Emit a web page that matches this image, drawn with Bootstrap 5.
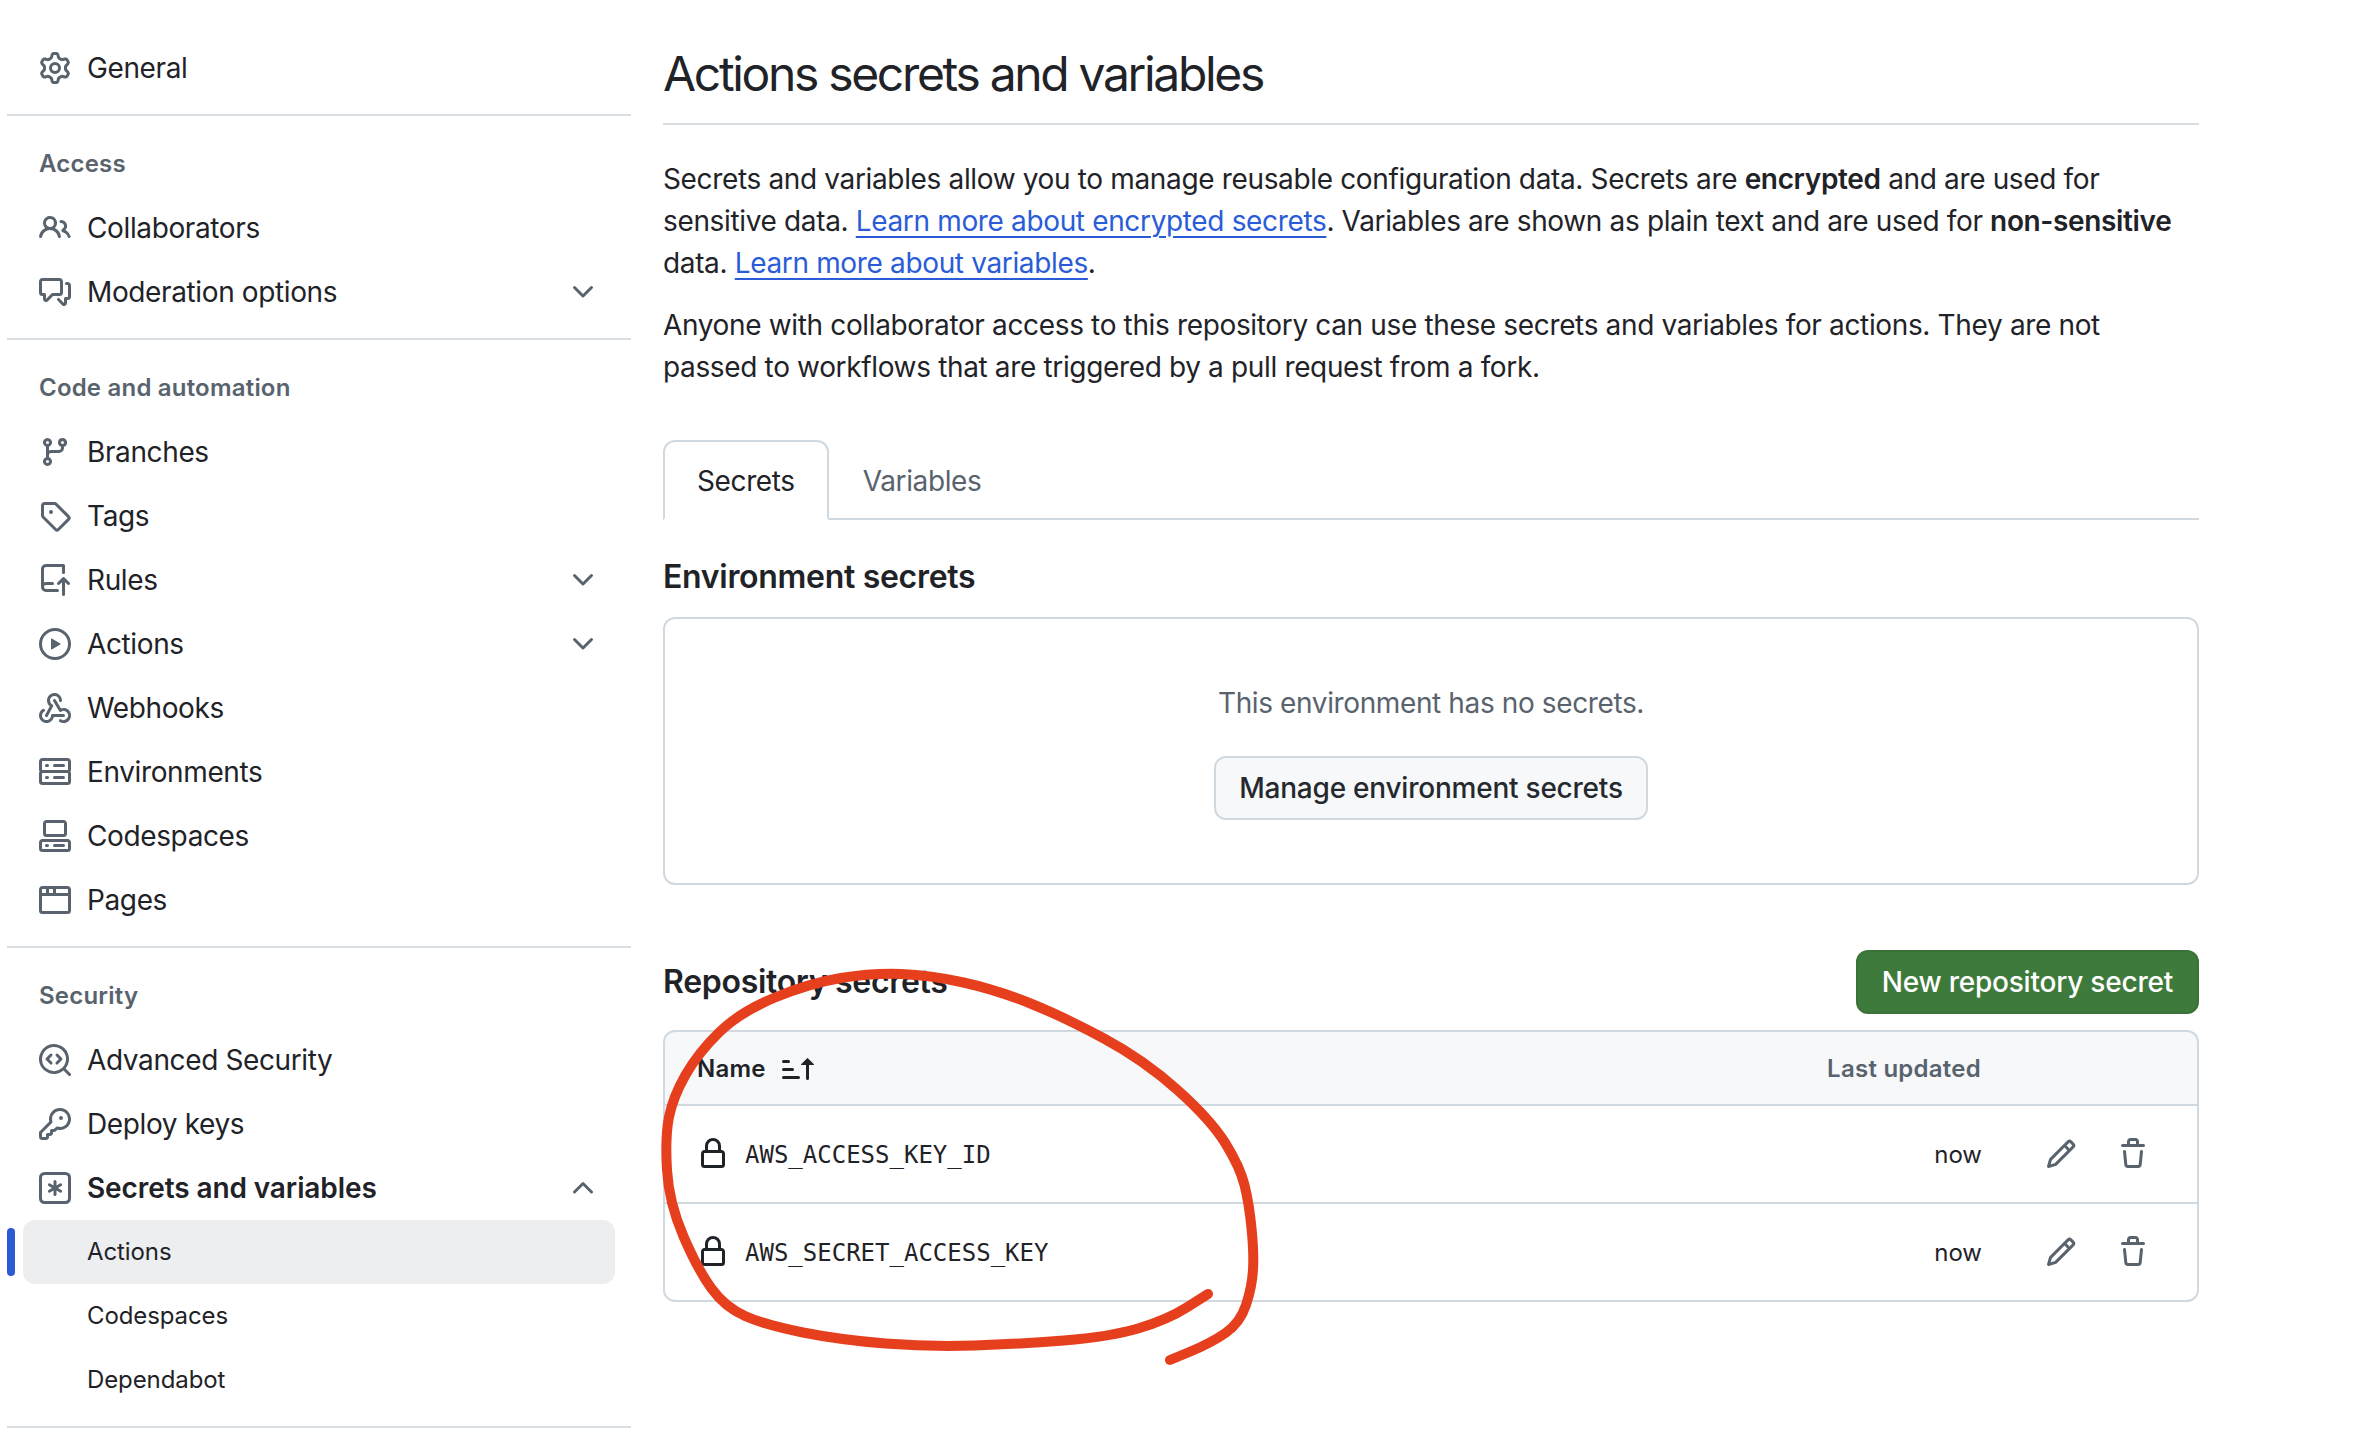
<!DOCTYPE html>
<html lang="en">
  <head>
    <meta charset="UTF-8" />
    <meta name="viewport" content="width=device-width, initial-scale=1.0" />
    <title>Actions secrets and variables</title>
    <link
      href="https://cdn.jsdelivr.net/npm/bootstrap@5.3.0/dist/css/bootstrap.min.css"
      rel="stylesheet"
    />
    <style>
      body {
        font-family: Inter, "Liberation Sans", sans-serif;
        font-size: 28px;
        line-height: 42px;
        letter-spacing: -0.38px;
        color: #1f2328;
        background: #fff;
        position: relative;
        min-height: 1446px;
      }
      .ico {
        width: 32px;
        height: 32px;
        fill: #59636e;
        flex: none;
      }
      .ico-dark {
        fill: #1f2328;
      }
      /* Sidebar */
      .side-col {
        width: 624px;
        margin-left: 7px;
        margin-right: 32px;
        padding-top: 36px;
        flex: none;
      }
      .side-link {
        height: 64px;
        margin: 0 16px;
        padding: 0 16px;
        border-radius: 12px;
        color: #1f2328;
        position: relative;
      }
      .side-link:hover {
        color: #1f2328;
      }
      .side-link .ico-end {
        margin-left: auto;
      }
      .side-strong {
        font-weight: 600;
        letter-spacing: -0.1px;
      }
      .side-sub {
        font-size: 24px;
        letter-spacing: -0.1px;
        padding-left: 64px;
      }
      .side-current {
        background: #eceef0;
      }
      .side-current::before {
        content: "";
        position: absolute;
        left: -16px;
        top: 8px;
        width: 8px;
        height: 48px;
        border-radius: 12px;
        background: #2d5bd3;
      }
      .side-rule {
        height: 2px;
        margin: 14px 0 0;
        background: #d9dee3;
        border: 0;
        opacity: 1;
      }
      .side-head {
        font-size: 24px;
        font-weight: 600;
        line-height: 36px;
        letter-spacing: 0.2px;
        color: #59636e;
        margin: 0;
        padding: 30px 32px 14px;
      }
      /* Main column */
      .main-col {
        width: 1536px;
        flex: none;
      }
      .page-title {
        font-size: 48px;
        font-weight: 400;
        line-height: 72px;
        letter-spacing: -2.33px;
        margin: 38px 0 0;
        padding-bottom: 13px;
        border-bottom: 2px solid #d9dee3;
      }
      .intro {
        letter-spacing: -0.35px;
        margin: 33px 0 20px;
      }
      .intro + .intro {
        margin-top: 0;
      }
      .intro a {
        color: #2a5cd8;
        text-decoration-thickness: 2px;
        text-underline-offset: 5px;
      }
      .intro b {
        font-weight: 600;
      }
      .tab-strip {
        --bs-nav-tabs-border-width: 2px;
        --bs-nav-tabs-border-color: #d1d9e0;
        --bs-nav-tabs-border-radius: 12px;
        --bs-nav-tabs-link-active-color: #1f2328;
        --bs-nav-tabs-link-active-bg: #fff;
        --bs-nav-tabs-link-active-border-color: #d1d9e0 #d1d9e0 #fff;
        --bs-nav-link-padding-x: 32px;
        --bs-nav-link-padding-y: 17px;
        --bs-nav-link-color: #59636e;
        --bs-nav-link-font-size: 28px;
        margin-top: 52px;
      }
      .tab-strip .nav-link {
        padding-top: 18px;
        padding-bottom: 16px;
      }
      .sec-title {
        font-size: 32px;
        font-weight: 600;
        line-height: 48px;
        letter-spacing: -0.3px;
        margin: 0;
      }
      .env-title {
        margin-top: 33px;
      }
      .empty-box {
        border: 2px solid #d1d9e0;
        border-radius: 12px;
        margin-top: 16px;
        padding: 63px 0;
        color: #59636e;
      }
      .btn-plain,
      .btn-create {
        font-size: 28px;
        font-weight: 500;
        line-height: 42px;
        border-radius: 12px;
        border-width: 2px;
      }
      .btn-plain {
        margin-top: 32px;
        padding: 9px 23px;
        letter-spacing: -0.23px;
        color: #25292e;
        background: #f6f8fa;
        border-color: #d1d9e0;
      }
      .btn-create {
        padding: 9px 24px;
        letter-spacing: -0.22px;
        color: #fff;
        background: #3e7a3c;
        border-color: #3a7238;
      }
      .repo-head {
        margin-top: 65px;
      }
      .secret-list {
        --bs-list-group-border-width: 2px;
        --bs-list-group-border-color: #d1d9e0;
        --bs-list-group-border-radius: 12px;
        --bs-list-group-color: #1f2328;
        margin-top: 16px;
      }
      .secret-top {
        height: 76px;
        padding: 2px 216px 0 32px;
        background: #f6f8fa;
        font-size: 24px;
        font-weight: 600;
        letter-spacing: 0.25px;
      }
      .secret-top .muted-head {
        color: #59636e;
      }
      .secret-row {
        height: 98px;
        padding: 0 48px 0 32px;
      }
      .secret-name {
        font-family: "DejaVu Sans Mono", "Liberation Mono", monospace;
        font-size: 24px;
        letter-spacing: 0;
        padding-top: 2px;
      }
      .secret-when {
        font-size: 24px;
        letter-spacing: 0;
        padding-top: 1px;
      }
      .row-tools {
        margin-left: 63px;
        gap: 40px;
      }
      .scribble {
        position: absolute;
        left: 0;
        top: 0;
        pointer-events: none;
      }
    </style>
  </head>
  <body>
    <!-- octicons used on the page -->
    <svg width="0" height="0" class="position-absolute">
      <symbol id="i-gear" viewBox="0 0 16 16"><path d="M8 0a8.2 8.2 0 0 1 .701.031C9.444.095 9.99.645 10.16 1.29l.288 1.107c.018.066.079.158.212.224.231.114.454.243.668.386.123.082.233.09.299.071l1.103-.303c.644-.176 1.392.021 1.82.63.27.385.506.792.704 1.218.315.675.111 1.422-.364 1.891l-.814.806c-.049.048-.098.147-.088.294.016.257.016.515 0 .772-.01.147.038.246.088.294l.814.806c.475.469.679 1.216.364 1.891a7.977 7.977 0 0 1-.704 1.217c-.428.61-1.176.807-1.82.63l-1.102-.302c-.067-.019-.177-.011-.3.071a5.909 5.909 0 0 1-.668.386c-.133.066-.194.158-.211.224l-.29 1.106c-.168.646-.715 1.196-1.458 1.26a8.006 8.006 0 0 1-1.402 0c-.743-.064-1.289-.614-1.458-1.26l-.289-1.106c-.018-.066-.079-.158-.212-.224a5.738 5.738 0 0 1-.668-.386c-.123-.082-.233-.09-.299-.071l-1.103.303c-.644.176-1.392-.021-1.82-.63a8.12 8.12 0 0 1-.704-1.218c-.315-.675-.111-1.422.363-1.891l.815-.806c.05-.048.098-.147.088-.294a6.214 6.214 0 0 1 0-.772c.01-.147-.038-.246-.088-.294l-.815-.806C.635 6.045.431 5.298.746 4.623a7.92 7.92 0 0 1 .704-1.217c.428-.61 1.176-.807 1.82-.63l1.102.302c.067.019.177.011.3-.071.214-.143.437-.272.668-.386.133-.066.194-.158.211-.224l.29-1.106C6.009.645 6.556.095 7.299.03 7.53.01 7.764 0 8 0Zm-.571 1.525c-.036.003-.108.036-.137.146l-.289 1.105c-.147.561-.549.967-.998 1.189-.173.086-.34.183-.5.29-.417.278-.97.423-1.529.27l-1.103-.303c-.109-.03-.175.016-.195.045-.22.312-.412.644-.573.99-.014.031-.021.11.059.19l.815.806c.411.406.562.957.53 1.456a4.709 4.709 0 0 0 0 .582c.032.499-.119 1.05-.53 1.456l-.815.806c-.081.08-.073.159-.059.19.162.346.353.677.573.989.02.03.085.076.195.046l1.102-.303c.56-.153 1.113-.008 1.53.27.161.107.328.204.501.29.447.222.85.629.997 1.189l.289 1.105c.029.109.101.143.137.146a6.6 6.6 0 0 0 1.142 0c.036-.003.108-.036.137-.146l.289-1.105c.147-.561.549-.967.998-1.189.173-.086.34-.183.5-.29.417-.278.97-.423 1.529-.27l1.103.303c.109.029.175-.016.195-.045.22-.313.411-.644.573-.99.014-.031.021-.11-.059-.19l-.815-.806c-.411-.406-.562-.957-.53-1.456a4.709 4.709 0 0 0 0-.582c-.032-.499.119-1.05.53-1.456l.815-.806c.081-.08.073-.159.059-.19a6.464 6.464 0 0 0-.573-.989c-.02-.03-.085-.076-.195-.046l-1.102.303c-.56.153-1.113.008-1.53-.27a4.44 4.44 0 0 0-.501-.29c-.447-.222-.85-.629-.997-1.189l-.289-1.105c-.029-.11-.101-.143-.137-.146a6.6 6.6 0 0 0-1.142 0ZM11 8a3 3 0 1 1-6 0 3 3 0 0 1 6 0ZM9.5 8a1.5 1.5 0 1 0-3.001.001A1.5 1.5 0 0 0 9.5 8Z"/></symbol>
      <symbol id="i-people" viewBox="0 0 16 16"><path d="M2 5.5a3.5 3.5 0 1 1 5.898 2.549 5.508 5.508 0 0 1 3.034 4.084.75.75 0 1 1-1.482.235 4 4 0 0 0-7.9 0 .75.75 0 0 1-1.482-.236A5.507 5.507 0 0 1 3.102 8.05 3.493 3.493 0 0 1 2 5.5ZM11 4a3.001 3.001 0 0 1 2.22 5.018 5.01 5.01 0 0 1 2.56 3.012.749.749 0 0 1-.885.954.752.752 0 0 1-.549-.514 3.507 3.507 0 0 0-2.522-2.372.75.75 0 0 1-.574-.73v-.352a.75.75 0 0 1 .416-.672A1.5 1.5 0 0 0 11 5.5.75.75 0 0 1 11 4Zm-5.5-.5a2 2 0 1 0-.001 3.999A2 2 0 0 0 5.5 3.5Z"/></symbol>
      <symbol id="i-comment" viewBox="0 0 16 16"><path d="M1.75 1h8.5c.966 0 1.75.784 1.75 1.75v5.5A1.75 1.75 0 0 1 10.25 10H7.061l-2.574 2.573A1.458 1.458 0 0 1 2 11.543V10h-.25A1.75 1.75 0 0 1 0 8.25v-5.5C0 1.784.784 1 1.75 1ZM1.5 2.75v5.5c0 .138.112.25.25.25h1a.75.75 0 0 1 .75.75v2.19l2.72-2.72a.749.749 0 0 1 .53-.22h3.5a.25.25 0 0 0 .25-.25v-5.5a.25.25 0 0 0-.25-.25h-8.5a.25.25 0 0 0-.25.25Zm13 2a.25.25 0 0 0-.25-.25h-.5a.75.75 0 0 1 0-1.5h.5c.966 0 1.75.784 1.75 1.75v5.5A1.75 1.75 0 0 1 14.25 12H14v1.543a1.458 1.458 0 0 1-2.487 1.03L9.22 12.28a.749.749 0 0 1 .326-1.275.749.749 0 0 1 .734.215l2.22 2.22v-2.19a.75.75 0 0 1 .75-.75h1a.25.25 0 0 0 .25-.25Z"/></symbol>
      <symbol id="i-down" viewBox="0 0 16 16"><path d="M12.78 5.22a.749.749 0 0 1 0 1.06l-4.25 4.25a.749.749 0 0 1-1.06 0L3.22 6.28a.749.749 0 1 1 1.06-1.06L8 8.939l3.72-3.719a.749.749 0 0 1 1.06 0Z"/></symbol>
      <symbol id="i-up" viewBox="0 0 16 16"><path d="M3.22 10.53a.749.749 0 0 1 0-1.06l4.25-4.25a.749.749 0 0 1 1.06 0l4.25 4.25a.749.749 0 1 1-1.06 1.06L8 6.811 4.28 10.53a.749.749 0 0 1-1.06 0Z"/></symbol>
      <symbol id="i-branch" viewBox="0 0 16 16"><path d="M9.5 3.25a2.25 2.25 0 1 1 3 2.122V6A2.5 2.5 0 0 1 10 8.5H6a1 1 0 0 0-1 1v1.128a2.251 2.251 0 1 1-1.5 0V5.372a2.25 2.25 0 1 1 1.5 0v1.836A2.493 2.493 0 0 1 6 7h4a1 1 0 0 0 1-1v-.628A2.25 2.25 0 0 1 9.5 3.25Zm-6 0a.75.75 0 1 0 1.5 0 .75.75 0 0 0-1.5 0Zm8.25-.75a.75.75 0 1 0 0 1.5.75.75 0 0 0 0-1.5ZM4.25 12a.75.75 0 1 0 0 1.5.75.75 0 0 0 0-1.5Z"/></symbol>
      <symbol id="i-tag" viewBox="0 0 16 16"><path d="M1 7.775V2.75C1 1.784 1.784 1 2.75 1h5.025c.464 0 .91.184 1.238.513l6.25 6.25a1.75 1.75 0 0 1 0 2.474l-5.026 5.026a1.75 1.75 0 0 1-2.474 0l-6.25-6.25A1.752 1.752 0 0 1 1 7.775Zm1.5 0c0 .066.026.13.073.177l6.25 6.25a.25.25 0 0 0 .354 0l5.025-5.025a.25.25 0 0 0 0-.354l-6.25-6.25a.25.25 0 0 0-.177-.073H2.75a.25.25 0 0 0-.25.25ZM6 5a1 1 0 1 1 0 2 1 1 0 0 1 0-2Z"/></symbol>
      <symbol id="i-rules" viewBox="0 0 16 16"><path d="M1 2.5A2.5 2.5 0 0 1 3.5 0h8.75a.75.75 0 0 1 .75.75v3.5a.75.75 0 0 1-1.5 0V1.5h-8a1 1 0 0 0-1 1v6.708A2.493 2.493 0 0 1 3.5 9h3.25a.75.75 0 0 1 0 1.5H3.5a1 1 0 0 0 0 2h5.75a.75.75 0 0 1 0 1.5H3.5A2.5 2.5 0 0 1 1 11.5Zm13.23 7.79h-.001l-1.224-1.224v6.184a.75.75 0 0 1-1.5 0V9.066L10.28 10.29a.75.75 0 0 1-1.06-1.06l2.505-2.504a.75.75 0 0 1 1.06 0L15.29 9.23a.75.75 0 0 1-1.06 1.06Z"/></symbol>
      <symbol id="i-play" viewBox="0 0 16 16"><path d="M8 0a8 8 0 1 1 0 16A8 8 0 0 1 8 0ZM1.5 8a6.5 6.5 0 1 0 13 0 6.5 6.5 0 0 0-13 0Zm4.879-2.773 4.264 2.559a.25.25 0 0 1 0 .428l-4.264 2.559A.25.25 0 0 1 6 10.559V5.442a.25.25 0 0 1 .379-.215Z"/></symbol>
      <symbol id="i-webhook" viewBox="0 0 16 16"><path d="M5.5 4.25a2.25 2.25 0 0 1 4.5 0 .75.75 0 0 0 1.5 0 3.75 3.75 0 1 0-6.14 2.889l-2.272 4.258a.75.75 0 0 0 1.324.706L7 7.25a.75.75 0 0 0-.309-1.015A2.25 2.25 0 0 1 5.5 4.25Z"/><path d="M7.364 3.607a.75.75 0 0 1 1.03.257l2.608 4.349a3.75 3.75 0 1 1-.628 6.785.75.75 0 0 1 .752-1.299 2.25 2.25 0 1 0-.033-3.88.75.75 0 0 1-1.03-.256L7.107 4.636a.75.75 0 0 1 .257-1.03Z"/><path d="M2.9 8.776A.75.75 0 0 1 2.625 9.8 2.25 2.25 0 1 0 6 11.75a.75.75 0 0 1 .75-.751h5.5a.75.75 0 0 1 0 1.5H7.425a3.751 3.751 0 1 1-5.55-3.998.75.75 0 0 1 1.024.274Z"/></symbol>
      <symbol id="i-server" viewBox="0 0 16 16"><path d="M1.75 1h12.5c.966 0 1.75.784 1.75 1.75v4c0 .372-.116.717-.314 1 .198.283.314.628.314 1v4a1.75 1.75 0 0 1-1.75 1.75H1.75A1.75 1.75 0 0 1 0 12.75v-4c0-.358.109-.707.314-1a1.739 1.739 0 0 1-.314-1v-4C0 1.784.784 1 1.75 1ZM1.5 2.75v4c0 .138.112.25.25.25h12.5a.25.25 0 0 0 .25-.25v-4a.25.25 0 0 0-.25-.25H1.75a.25.25 0 0 0-.25.25Zm.25 5.75a.25.25 0 0 0-.25.25v4c0 .138.112.25.25.25h12.5a.25.25 0 0 0 .25-.25v-4a.25.25 0 0 0-.25-.25ZM7 4.75A.75.75 0 0 1 7.75 4h4.5a.75.75 0 0 1 0 1.5h-4.5A.75.75 0 0 1 7 4.75ZM7.75 10h4.5a.75.75 0 0 1 0 1.5h-4.5a.75.75 0 0 1 0-1.5ZM3 4.75A.75.75 0 0 1 3.75 4h.5a.75.75 0 0 1 0 1.5h-.5A.75.75 0 0 1 3 4.75ZM3.75 10h.5a.75.75 0 0 1 0 1.5h-.5a.75.75 0 0 1 0-1.5Z"/></symbol>
      <symbol id="i-codespaces" viewBox="0 0 16 16"><path d="M0 11.25c0-.966.784-1.75 1.75-1.75h12.5c.966 0 1.75.784 1.75 1.75v3A1.75 1.75 0 0 1 14.25 16H1.75A1.75 1.75 0 0 1 0 14.25Zm2-9.5C2 .784 2.784 0 3.75 0h8.5C13.216 0 14 .784 14 1.75v5a1.75 1.75 0 0 1-1.75 1.75h-8.5A1.75 1.75 0 0 1 2 6.75Zm1.75-.25a.25.25 0 0 0-.25.25v5c0 .138.112.25.25.25h8.5a.25.25 0 0 0 .25-.25v-5a.25.25 0 0 0-.25-.25Zm-2 9.5a.25.25 0 0 0-.25.25v3c0 .138.112.25.25.25h12.5a.25.25 0 0 0 .25-.25v-3a.25.25 0 0 0-.25-.25Z"/><path d="M7 12.75a.75.75 0 0 1 .75-.75h4.5a.75.75 0 0 1 0 1.5h-4.5a.75.75 0 0 1-.75-.75Zm-4 0a.75.75 0 0 1 .75-.75h.5a.75.75 0 0 1 0 1.5h-.5a.75.75 0 0 1-.75-.75Z"/></symbol>
      <symbol id="i-browser" viewBox="0 0 16 16"><path d="M0 2.75C0 1.784.784 1 1.75 1h12.5c.966 0 1.75.784 1.75 1.75v10.5A1.75 1.75 0 0 1 14.25 15H1.75A1.75 1.75 0 0 1 0 13.25ZM14.5 6h-13v7.25c0 .138.112.25.25.25h12.5a.25.25 0 0 0 .25-.25Zm-6-3.5v2h6v-1.75a.25.25 0 0 0-.25-.25ZM5 2.5v2h2v-2Zm-3.25 0a.25.25 0 0 0-.25.25V4.5h2v-2Z"/></symbol>
      <symbol id="i-codescan" viewBox="0 0 16 16"><path d="M8.47 4.97a.75.75 0 0 0 0 1.06L9.94 7.5 8.47 8.97a.75.75 0 1 0 1.06 1.06l2-2a.75.75 0 0 0 0-1.06l-2-2a.75.75 0 0 0-1.06 0ZM6.53 6.03a.75.75 0 0 0-1.06-1.06l-2 2a.75.75 0 0 0 0 1.06l2 2a.75.75 0 1 0 1.06-1.06L5.06 7.5l1.47-1.47Z"/><path d="M12.246 13.307a7.501 7.501 0 1 1 1.06-1.06l2.474 2.473a.749.749 0 0 1-.326 1.275.749.749 0 0 1-.734-.215ZM1.5 7.5a6.002 6.002 0 0 0 3.608 5.504 6.002 6.002 0 0 0 6.486-1.117.748.748 0 0 1 .292-.293A6 6 0 1 0 1.5 7.5Z"/></symbol>
      <symbol id="i-key" viewBox="0 0 16 16"><path d="M10.5 0a5.499 5.499 0 1 1-1.288 10.848l-.932.932a.749.749 0 0 1-.53.22H7v.75a.749.749 0 0 1-.22.53l-.5.5a.749.749 0 0 1-.53.22H5v.75a.749.749 0 0 1-.22.53l-.5.5a.749.749 0 0 1-.53.22h-2A1.75 1.75 0 0 1 0 14.25v-2c0-.199.079-.389.22-.53l4.932-4.932A5.5 5.5 0 0 1 10.5 0Zm-4 5.5c-.001.431.069.86.205 1.269a.75.75 0 0 1-.181.768L1.5 12.56v1.69c0 .138.112.25.25.25h1.69l.06-.06v-1.19a.75.75 0 0 1 .75-.75h1.19l.06-.06v-1.19a.75.75 0 0 1 .75-.75h1.19l1.023-1.025a.75.75 0 0 1 .768-.18A4 4 0 1 0 6.5 5.5ZM11 6a1 1 0 1 1 0-2 1 1 0 0 1 0 2Z"/></symbol>
      <symbol id="i-asterisk" viewBox="0 0 16 16"><path d="M0 2.75A2.75 2.75 0 0 1 2.75 0h10.5A2.75 2.75 0 0 1 16 2.75v10.5A2.75 2.75 0 0 1 13.25 16H2.75A2.75 2.75 0 0 1 0 13.25ZM2.75 1.5c-.69 0-1.25.56-1.25 1.25v10.5c0 .69.56 1.25 1.25 1.25h10.5c.69 0 1.25-.56 1.25-1.25V2.75c0-.69-.56-1.25-1.25-1.25Z"/><path d="M8 4a.75.75 0 0 1 .75.75V6.7l1.69-.975a.75.75 0 0 1 .75 1.3L9.5 8l1.69.976a.75.75 0 0 1-.75 1.298L8.75 9.3v1.951a.75.75 0 0 1-1.5 0V9.299l-1.69.976a.75.75 0 0 1-.75-1.3L6.5 8l-1.69-.975a.75.75 0 0 1 .75-1.3l1.69.976V4.75A.75.75 0 0 1 8 4Z"/></symbol>
      <symbol id="i-lock" viewBox="0 0 16 16"><path d="M4 4a4 4 0 0 1 8 0v2h.25c.966 0 1.75.784 1.75 1.75v5.5A1.75 1.75 0 0 1 12.25 15h-8.5A1.75 1.75 0 0 1 2 13.25v-5.5C2 6.784 2.784 6 3.75 6H4Zm8.25 3.5h-8.5a.25.25 0 0 0-.25.25v5.5c0 .138.112.25.25.25h8.5a.25.25 0 0 0 .25-.25v-5.5a.25.25 0 0 0-.25-.25ZM10.5 6V4a2.5 2.5 0 1 0-5 0v2Z"/></symbol>
      <symbol id="i-pencil" viewBox="0 0 16 16"><path d="M11.013 1.427a1.75 1.75 0 0 1 2.474 0l1.086 1.086a1.75 1.75 0 0 1 0 2.474l-8.61 8.61c-.21.21-.47.364-.756.445l-3.251.93a.75.75 0 0 1-.927-.928l.929-3.25c.081-.286.235-.547.445-.758l8.61-8.61Zm.176 4.823L9.75 4.81l-6.286 6.287a.253.253 0 0 0-.064.108l-.558 1.953 1.953-.558a.253.253 0 0 0 .108-.064Zm1.238-3.763a.25.25 0 0 0-.354 0L10.811 3.75l1.439 1.44 1.263-1.263a.25.25 0 0 0 0-.354Z"/></symbol>
      <symbol id="i-trash" viewBox="0 0 16 16"><path d="M11 1.75V3h2.25a.75.75 0 0 1 0 1.5H2.75a.75.75 0 0 1 0-1.5H5V1.75C5 .784 5.784 0 6.75 0h2.5C10.216 0 11 .784 11 1.75ZM4.496 6.675l.66 6.6a.25.25 0 0 0 .249.225h5.19a.25.25 0 0 0 .249-.225l.66-6.6a.75.75 0 0 1 1.492.149l-.66 6.6A1.748 1.748 0 0 1 10.595 15h-5.19a1.75 1.75 0 0 1-1.741-1.575l-.66-6.6a.75.75 0 1 1 1.492-.15ZM6.5 1.75V3h3V1.75a.25.25 0 0 0-.25-.25h-2.5a.25.25 0 0 0-.25.25Z"/></symbol>
      <symbol id="i-sort" viewBox="0 0 16 16"><path d="m12.927 2.573 3 3A.25.25 0 0 1 15.75 6H13.5v6.75a.75.75 0 0 1-1.5 0V6H9.75a.25.25 0 0 1-.177-.427l3-3a.25.25 0 0 1 .354 0ZM0 12.25a.75.75 0 0 1 .75-.75h7.5a.75.75 0 0 1 0 1.5H.75a.75.75 0 0 1-.75-.75Zm0-4a.75.75 0 0 1 .75-.75h4.5a.75.75 0 0 1 0 1.5H.75A.75.75 0 0 1 0 8.25Zm0-4a.75.75 0 0 1 .75-.75h2.5a.75.75 0 0 1 0 1.5H.75A.75.75 0 0 1 0 4.25Z"/></symbol>
    </svg>

    <div class="d-flex">
      <!-- Sidebar -->
      <aside class="side-col">
        <nav class="d-flex flex-column">
          <a class="side-link d-flex align-items-center gap-3 text-decoration-none" href="#"><svg class="ico"><use href="#i-gear"/></svg>General</a>
        </nav>
        <hr class="side-rule" />

        <h2 class="side-head">Access</h2>
        <nav class="d-flex flex-column">
          <a class="side-link d-flex align-items-center gap-3 text-decoration-none" href="#"><svg class="ico"><use href="#i-people"/></svg>Collaborators</a>
          <a class="side-link d-flex align-items-center gap-3 text-decoration-none" href="#"><svg class="ico"><use href="#i-comment"/></svg>Moderation options<svg class="ico ico-end"><use href="#i-down"/></svg></a>
        </nav>
        <hr class="side-rule" />

        <h2 class="side-head">Code and automation</h2>
        <nav class="d-flex flex-column">
          <a class="side-link d-flex align-items-center gap-3 text-decoration-none" href="#"><svg class="ico"><use href="#i-branch"/></svg>Branches</a>
          <a class="side-link d-flex align-items-center gap-3 text-decoration-none" href="#"><svg class="ico"><use href="#i-tag"/></svg>Tags</a>
          <a class="side-link d-flex align-items-center gap-3 text-decoration-none" href="#"><svg class="ico"><use href="#i-rules"/></svg>Rules<svg class="ico ico-end"><use href="#i-down"/></svg></a>
          <a class="side-link d-flex align-items-center gap-3 text-decoration-none" href="#"><svg class="ico"><use href="#i-play"/></svg>Actions<svg class="ico ico-end"><use href="#i-down"/></svg></a>
          <a class="side-link d-flex align-items-center gap-3 text-decoration-none" href="#"><svg class="ico"><use href="#i-webhook"/></svg>Webhooks</a>
          <a class="side-link d-flex align-items-center gap-3 text-decoration-none" href="#"><svg class="ico"><use href="#i-server"/></svg>Environments</a>
          <a class="side-link d-flex align-items-center gap-3 text-decoration-none" href="#"><svg class="ico"><use href="#i-codespaces"/></svg>Codespaces</a>
          <a class="side-link d-flex align-items-center gap-3 text-decoration-none" href="#"><svg class="ico"><use href="#i-browser"/></svg>Pages</a>
        </nav>
        <hr class="side-rule" />

        <h2 class="side-head">Security</h2>
        <nav class="d-flex flex-column">
          <a class="side-link d-flex align-items-center gap-3 text-decoration-none" href="#"><svg class="ico"><use href="#i-codescan"/></svg>Advanced Security</a>
          <a class="side-link d-flex align-items-center gap-3 text-decoration-none" href="#"><svg class="ico"><use href="#i-key"/></svg>Deploy keys</a>
          <a class="side-link side-strong d-flex align-items-center gap-3 text-decoration-none" href="#"><svg class="ico"><use href="#i-asterisk"/></svg>Secrets and variables<svg class="ico ico-end"><use href="#i-up"/></svg></a>
          <a class="side-link side-sub side-current d-flex align-items-center text-decoration-none" href="#">Actions</a>
          <a class="side-link side-sub d-flex align-items-center text-decoration-none" href="#">Codespaces</a>
          <a class="side-link side-sub d-flex align-items-center text-decoration-none" href="#">Dependabot</a>
        </nav>
        <hr class="side-rule" />
      </aside>

      <!-- Main content -->
      <main class="main-col">
        <h1 class="page-title">Actions secrets and variables</h1>
        <p class="intro">
          Secrets and variables allow you to manage reusable configuration data. Secrets are <b>encrypted</b> and are used for<br />
          sensitive data. <a href="#">Learn more about encrypted secrets</a>. Variables are shown as plain text and are used for <b>non-sensitive</b><br />
          data. <a href="#">Learn more about variables</a>.
        </p>
        <p class="intro">
          Anyone with collaborator access to this repository can use these secrets and variables for actions. They are not<br />
          passed to workflows that are triggered by a pull request from a fork.
        </p>

        <ul class="nav nav-tabs tab-strip">
          <li class="nav-item"><a class="nav-link active" href="#">Secrets</a></li>
          <li class="nav-item"><a class="nav-link" href="#">Variables</a></li>
        </ul>

        <h3 class="sec-title env-title">Environment secrets</h3>
        <div class="empty-box d-flex flex-column align-items-center">
          <div>This environment has no secrets.</div>
          <button type="button" class="btn btn-plain">Manage environment secrets</button>
        </div>

        <div class="repo-head d-flex justify-content-between align-items-center">
          <h3 class="sec-title">Repository secrets</h3>
          <button type="button" class="btn btn-create">New repository secret</button>
        </div>

        <div class="list-group secret-list">
          <div class="list-group-item secret-top d-flex align-items-center">
            <span>Name</span>
            <svg class="ico ico-dark ms-3"><use href="#i-sort"/></svg>
            <span class="muted-head ms-auto">Last updated</span>
          </div>
          <div class="list-group-item secret-row d-flex align-items-center">
            <svg class="ico ico-dark"><use href="#i-lock"/></svg>
            <span class="secret-name ms-3">AWS_ACCESS_KEY_ID</span>
            <span class="secret-when ms-auto">now</span>
            <span class="row-tools d-flex">
              <svg class="ico"><use href="#i-pencil"/></svg>
              <svg class="ico"><use href="#i-trash"/></svg>
            </span>
          </div>
          <div class="list-group-item secret-row d-flex align-items-center">
            <svg class="ico ico-dark"><use href="#i-lock"/></svg>
            <span class="secret-name ms-3">AWS_SECRET_ACCESS_KEY</span>
            <span class="secret-when ms-auto">now</span>
            <span class="row-tools d-flex">
              <svg class="ico"><use href="#i-pencil"/></svg>
              <svg class="ico"><use href="#i-trash"/></svg>
            </span>
          </div>
        </div>
      </main>
    </div>

    <!-- Hand drawn circle on top of the screenshot -->
    <svg class="scribble" width="2362" height="1446" viewBox="0 0 2362 1446">
      <path
        fill="none"
        stroke="#e63f1e"
        stroke-width="10"
        stroke-linecap="round"
        stroke-linejoin="round"
        d="M1170 1360L1190.5 1351.5Q1211 1343 1225.5 1333Q1240 1323 1246 1305Q1252 1287 1253 1270Q1254 1253 1251.5 1228Q1249 1203 1244.5 1185Q1240 1167 1225.5 1143.5Q1211 1120 1177.5 1090Q1144 1060 1104 1038.5Q1064 1017 1030.5 1003.5Q997 990 963.5 982.5Q930 975 901 974Q872 973 841 978Q810 983 775 997.5Q740 1012 719 1032.5Q698 1053 685.5 1075Q673 1097 669 1117Q665 1137 667 1170Q669 1203 683.5 1236.5Q698 1270 711.5 1288.5Q725 1307 745 1316Q765 1325 803 1332.5Q841 1340 885.5 1343.5Q930 1347 974.5 1345.5Q1019 1344 1064 1340.5Q1109 1337 1138 1328.5Q1167 1320 1187.5 1307L1208 1294"
      />
    </svg>

    <script src="https://cdn.jsdelivr.net/npm/bootstrap@5.3.0/dist/js/bootstrap.bundle.min.js"></script>
  </body>
</html>
